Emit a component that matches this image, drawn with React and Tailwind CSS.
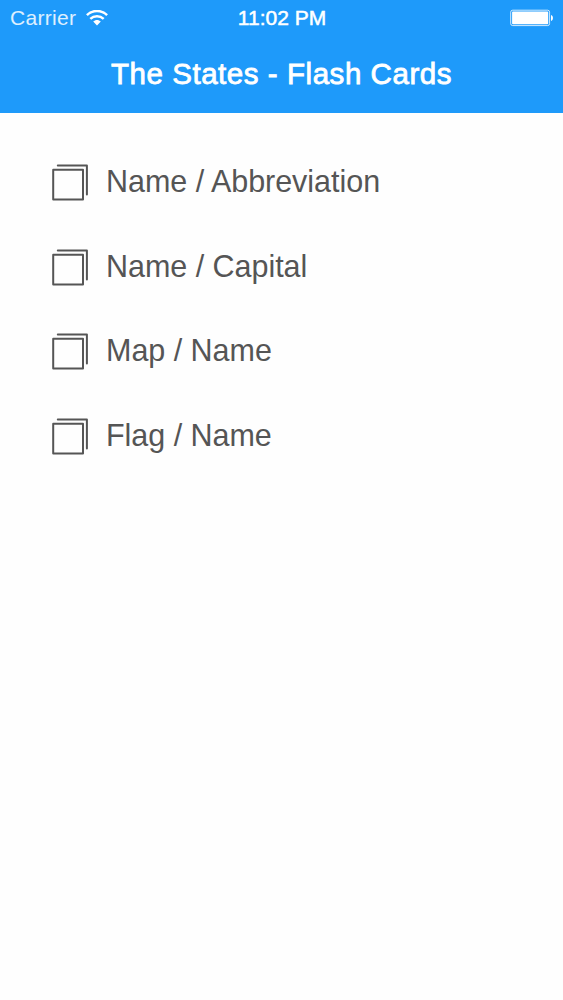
import React from 'react';

const decks = ['Name / Abbreviation', 'Name / Capital', 'Map / Name', 'Flag / Name'];

const WifiIcon = () => (
    <svg className="w-[22px] h-4" viewBox="0 0 22 16" fill="none" stroke="white" strokeWidth="2.5">
        <path d="M0.9 5.1C6.5 -0.4 15.5 -0.4 21.1 5.1" />
        <path d="M4.3 8.9C8.1 5.3 13.9 5.3 17.7 8.9" />
        <path d="M7.2 11.6C9.3 9.5 12.7 9.5 14.8 11.6L11 15.5Z" fill="white" stroke="none" />
    </svg>
);

const BatteryIcon = () => (
    <svg className="w-11 h-[18px]" viewBox="0 0 44 18">
        <rect x="0.7" y="1.2" width="38.9" height="15.4" rx="2" fill="none" stroke="white" strokeOpacity="0.8" strokeWidth="1" />
        <rect x="2.1" y="2.6" width="36.1" height="12.6" rx="0.8" fill="white" />
        <path d="M41 6.1C43.6 6.7 43.6 11.5 41 12.1Z" fill="white" />
    </svg>
);

const CardsIcon = () => (
    <svg className="w-9 h-[37px] shrink-0" viewBox="0 0 36 37" fill="none" stroke="#555555" strokeWidth="2" strokeLinejoin="round" strokeLinecap="round">
        <rect x="1.2" y="5.8" width="29.8" height="29.8" />
        <path d="M5.8 1.4H34.9V30.4" />
    </svg>
);

const StatusBar = () => (
    <div className="h-9 grid grid-cols-3 items-center pl-[10px] pr-[9px] text-[21px] leading-9">
        <div className="flex items-center gap-[10px]">
            <span className="text-white/85 tracking-[0.3px]">Carrier</span>
            <WifiIcon />
        </div>
        <span className="text-center [-webkit-text-stroke:0.5px_white]">11:02 PM</span>
        <div className="flex justify-end">
            <BatteryIcon />
        </div>
    </div>
);

const App = () => {
    return (
        <div className="min-h-screen bg-[#fefefe] font-['Liberation_Sans',Arial,sans-serif]">
            <header className="h-[112.5px] bg-[#1e9afa] text-white">
                <StatusBar />
                <h1 className="h-[76px] text-center text-[29.5px] leading-[75px] tracking-[0.55px] [-webkit-text-stroke:0.8px_white]">
                    The States - Flash Cards
                </h1>
            </header>
            <ul className="pt-[28px] pl-[52px]">
                {decks.map((deck) => (
                    <li key={deck} className="h-[84.5px] flex items-center gap-[18px] text-[30.5px] leading-9 text-[#555555]">
                        <CardsIcon />
                        <span className="pb-[3px] tracking-[-0.03px]">{deck}</span>
                    </li>
                ))}
            </ul>
        </div>
    );
};

export default App;
